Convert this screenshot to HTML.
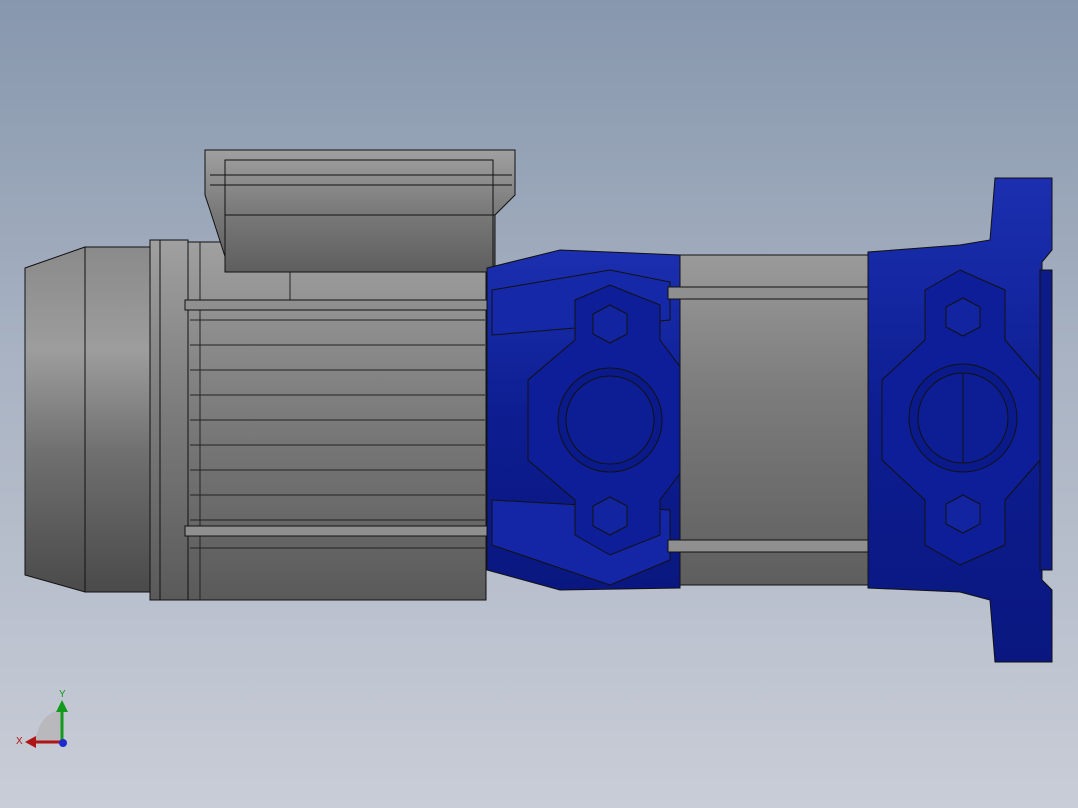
<!DOCTYPE html>
<html><head><meta charset="utf-8"><style>
html,body{margin:0;padding:0;width:1078px;height:808px;overflow:hidden;}
body{background:linear-gradient(#8797ad 0%,#a9b3c3 45%,#c9cdd7 100%);}
svg{position:absolute;left:0;top:0;}
</style></head><body>
<svg width="1078" height="808" viewBox="0 0 1078 808" xmlns="http://www.w3.org/2000/svg">
<defs>
<linearGradient id="g1" x1="0" y1="0" x2="0" y2="1">
<stop offset="0" stop-color="#8a8a8a"/><stop offset="0.3" stop-color="#9d9d9d"/><stop offset="0.6" stop-color="#6f6f6f"/><stop offset="1" stop-color="#4a4a4a"/></linearGradient>
<linearGradient id="g2" x1="0" y1="0" x2="0" y2="1">
<stop offset="0" stop-color="#a0a0a0"/><stop offset="0.5" stop-color="#7a7a7a"/><stop offset="1" stop-color="#5a5a5a"/></linearGradient>
<linearGradient id="gb" x1="0" y1="0" x2="0" y2="1">
<stop offset="0" stop-color="#1b2fb0"/><stop offset="0.5" stop-color="#0d1d90"/><stop offset="1" stop-color="#0a1780"/></linearGradient>
<linearGradient id="gs" x1="0" y1="0" x2="0" y2="1">
<stop offset="0" stop-color="#9a9a9a"/><stop offset="0.4" stop-color="#7d7d7d"/><stop offset="1" stop-color="#5e5e5e"/></linearGradient>
</defs>
<g stroke="#111" stroke-width="1">
<!-- fan cover -->
<polygon points="25,268 85,247 85,592 25,575" fill="url(#g1)"/>
<rect x="85" y="247" width="65" height="345" fill="url(#g1)"/>
<rect x="150" y="240" width="38" height="360" fill="url(#g2)"/>
<line x1="160" y1="240" x2="160" y2="600"/>
<!-- fins -->
<rect x="188" y="242" width="298" height="358" fill="url(#g2)"/>
<g stroke="#222">
<line x1="190" y1="320" x2="485" y2="320"/><line x1="190" y1="345" x2="485" y2="345"/>
<line x1="190" y1="370" x2="485" y2="370"/><line x1="190" y1="395" x2="485" y2="395"/>
<line x1="190" y1="420" x2="485" y2="420"/><line x1="190" y1="445" x2="485" y2="445"/>
<line x1="190" y1="470" x2="485" y2="470"/><line x1="190" y1="495" x2="485" y2="495"/>
<line x1="190" y1="520" x2="485" y2="520"/><line x1="190" y1="548" x2="485" y2="548"/>
<line x1="200" y1="242" x2="200" y2="600"/><line x1="290" y1="272" x2="290" y2="300"/>
</g>
<!-- terminal box -->
<polygon points="205,150 515,150 515,195 495,215 495,272 230,272 210,210 205,195" fill="url(#g2)"/>
<rect x="225" y="160" width="268" height="112" fill="url(#gs)"/>
<line x1="210" y1="175" x2="512" y2="175"/><line x1="210" y1="185" x2="512" y2="185"/>
<line x1="225" y1="215" x2="495" y2="215"/>
<!-- rods -->
<rect x="185" y="300" width="307" height="10" fill="#8f8f8f"/>
<rect x="185" y="526" width="307" height="10" fill="#8f8f8f"/>
<!-- blue housing -->
<polygon points="487,268 560,250 680,255 680,588 560,590 487,570" fill="url(#gb)"/>
<polygon points="492,290 610,270 670,282 670,320 492,335" fill="#1528a8"/>
<polygon points="492,500 670,510 670,560 610,585 492,545" fill="#1426a6"/>
<polygon points="575,300 610,285 660,305 660,340 690,380 690,460 660,500 660,535 610,555 575,535 575,500 528,460 528,380 575,340" fill="#0e1e98"/>
<circle cx="610" cy="420" r="52" fill="#0a1a8a"/><circle cx="610" cy="420" r="44" fill="#0d1d94"/>
<polygon points="610,305 627,314 627,334 610,343 593,334 593,314" fill="#1224a0"/>
<polygon points="610,497 627,506 627,526 610,535 593,526 593,506" fill="#1224a0"/>
<!-- sleeve -->
<rect x="680" y="255" width="188" height="330" fill="url(#gs)"/>
<rect x="668" y="287" width="218" height="12" fill="#8f8f8f"/>
<rect x="668" y="540" width="218" height="12" fill="#8f8f8f"/>
<!-- pump head -->
<polygon points="995,178 1052,178 1052,250 1042,262 1042,580 1052,590 1052,662 995,662 990,600 960,592 868,588 868,252 960,245 990,240" fill="url(#gb)"/>
<polygon points="925,290 960,270 1005,290 1005,340 1040,380 1040,460 1005,500 1005,545 960,565 925,545 925,500 882,460 882,380 925,340" fill="#0e1e98"/>
<circle cx="963" cy="418" r="54" fill="#0a1a8a"/><circle cx="963" cy="418" r="45" fill="#0d1d94"/>
<line x1="963" y1="373" x2="963" y2="463"/>
<polygon points="963,298 980,307 980,327 963,336 946,327 946,307" fill="#1224a0"/>
<polygon points="963,495 980,504 980,524 963,533 946,524 946,504" fill="#1224a0"/>
<rect x="1040" y="270" width="12" height="300" fill="#0c1b88"/>
</g>
<!-- axis triad -->
<path d="M35,742 Q40,712 62,710 L62,742 Z" fill="#b9b9bd"/>
<line x1="62" y1="742" x2="62" y2="708" stroke="#129a1c" stroke-width="3"/>
<polygon points="56,712 62,700 68,712" fill="#129a1c"/>
<line x1="62" y1="742" x2="34" y2="742" stroke="#b01515" stroke-width="3"/>
<polygon points="36,736 25,742 36,748" fill="#b01515"/>
<circle cx="63" cy="743" r="4" fill="#1d2ad0"/>
<text x="59" y="697" font-family="Liberation Sans, sans-serif" font-size="10" fill="#129a1c">Y</text>
<text x="16" y="744" font-family="Liberation Sans, sans-serif" font-size="10" fill="#b01515">X</text>
</svg>
</body></html>
